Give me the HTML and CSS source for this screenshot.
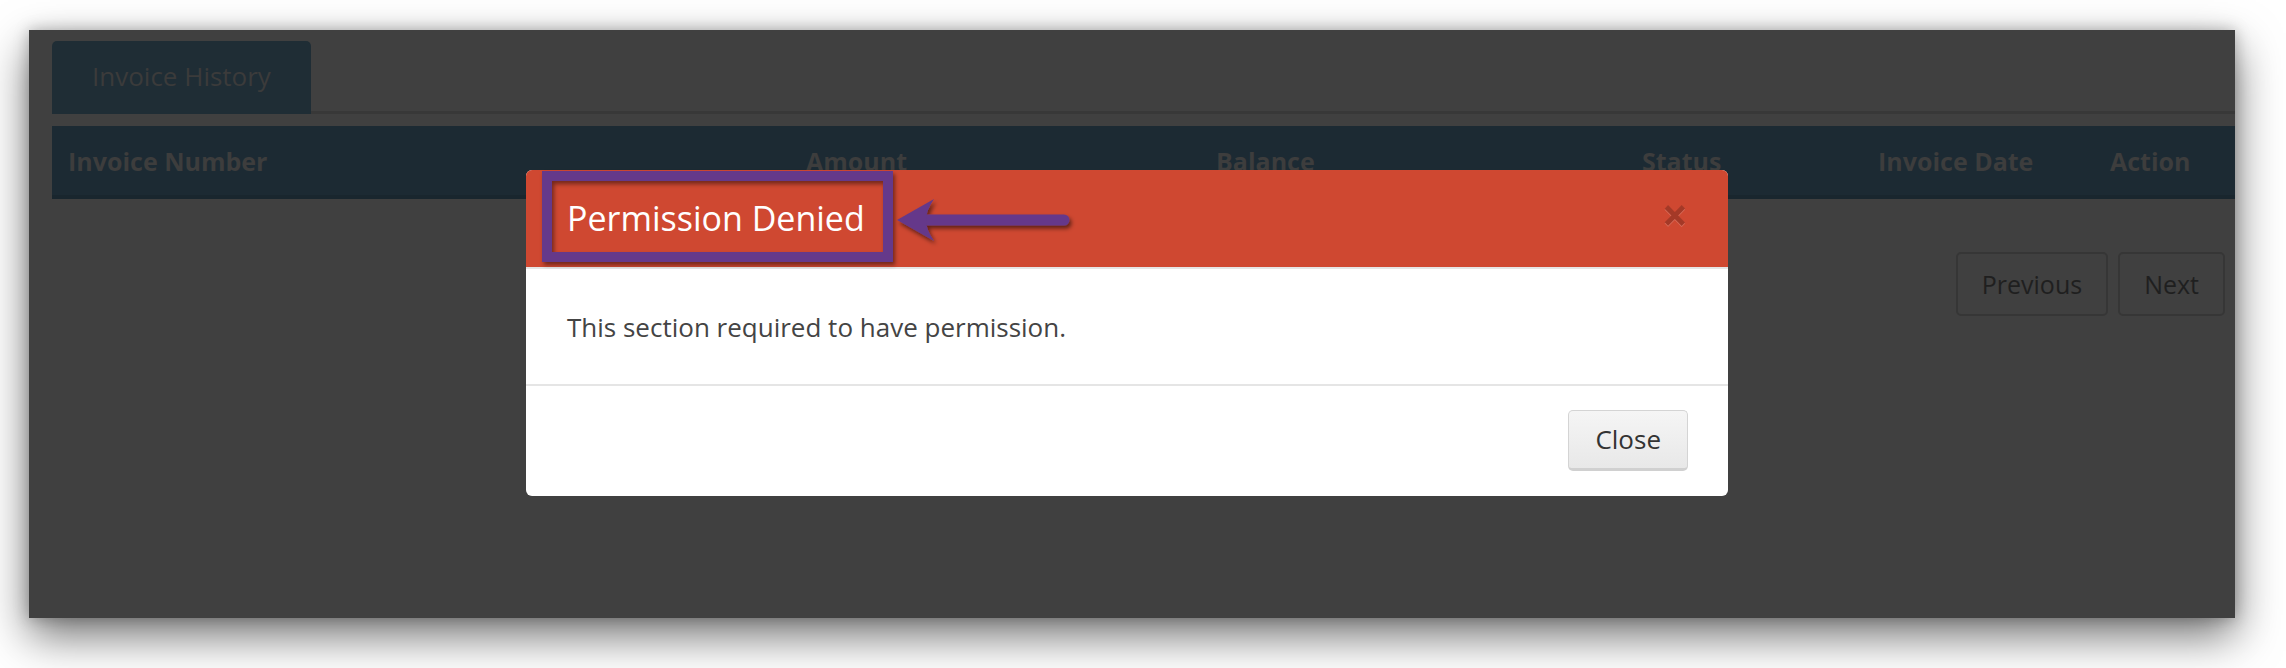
FILE: index.html
```html
<!DOCTYPE html>
<html>
<head>
<meta charset="utf-8">
<link rel="stylesheet" href="styles.css">
</head>
<body>
<div class="window">
  <div class="page">
    <div class="tabs">
      <div class="tab">Invoice History</div>
    </div>
    <div class="thead">
      <div class="th">Invoice Number</div>
      <div class="th">Amount</div>
      <div class="th">Balance</div>
      <div class="th">Status</div>
      <div class="th">Invoice Date</div>
      <div class="th">Action</div>
    </div>
    <div class="pager">
      <div class="pbtn">Previous</div>
      <div class="pbtn">Next</div>
    </div>
  </div>

  <div class="modal">
    <div class="modal-header">
      <div class="modal-title">Permission Denied</div>
      <div class="close">×</div>
    </div>
    <div class="modal-body">This section required to have permission.</div>
    <div class="modal-footer">
      <div class="btn">Close</div>
    </div>
    <div class="callout-box"></div>
    <svg class="callout-arrow" width="190" height="56" viewBox="0 0 190 56">
      <defs>
        <filter id="sh" x="-20%" y="-40%" width="140%" height="180%">
          <feDropShadow dx="2" dy="3" stdDeviation="2" flood-color="#000" flood-opacity="0.55"/>
        </filter>
      </defs>
      <g filter="url(#sh)">
        <line x1="36" y1="25" x2="174" y2="25" stroke="#65398a" stroke-width="11" stroke-linecap="round"/>
        <path d="M7 25 L44 4 Q36 16 36 25 Q36 34 44 46 Z" fill="#65398a"/>
      </g>
    </svg>
  </div>
</div>
</body>
</html>
```

FILE: styles.css
```css
html, body {
  margin: 0;
  padding: 0;
  background: #ffffff;
}
body {
  width: 2286px;
  height: 668px;
  overflow: hidden;
  font-family: "Open Sans", "Liberation Sans", sans-serif;
}
.window {
  position: relative;
  margin: 30px 0 0 29px;
  width: 2206px;
  height: 588px;
  background: #404040;
  box-shadow: 0 18px 42px rgba(0, 0, 0, 0.55), 0 0 14px rgba(0, 0, 0, 0.25);
}
.page {
  padding: 11px 0 0 23px;
}
.tabs {
  display: flex;
  border-bottom: 3px solid #383838;
  height: 70px;
}
.tab {
  width: 259px;
  height: 73px;
  box-sizing: border-box;
  background: #1f2d35;
  border-radius: 5px 5px 0 0;
  color: #3b3b3b;
  font-size: 26px;
  padding-left: 40px;
  line-height: 70px;
}
.thead {
  margin-top: 12px;
  height: 73px;
  box-sizing: border-box;
  background: #1c2a33;
  border-bottom: 4px solid #19262e;
  display: grid;
  grid-template-columns: 738px 410px 426px 236px 232px 1fr;
  align-items: center;
}
.th {
  padding-left: 16px;
  color: #3d3d3d;
  font-size: 25px;
  font-weight: 700;
}
.pager {
  margin-top: 53px;
  display: flex;
  justify-content: flex-end;
  gap: 10px;
  padding-right: 10px;
}
.pbtn {
  height: 64px;
  box-sizing: border-box;
  padding: 0 24px;
  border: 2px solid #363636;
  border-radius: 5px;
  color: #1f1f1f;
  font-size: 25px;
  line-height: 60px;
}
.modal {
  position: absolute;
  left: 497px;
  top: 140px;
  width: 1202px;
  background: #ffffff;
  border-radius: 6px;
}
.modal-header {
  height: 99px;
  box-sizing: border-box;
  background: #cf4831;
  border-radius: 6px 6px 0 0;
  border-bottom: 2px solid #e5e5e5;
  display: flex;
  align-items: center;
  justify-content: space-between;
  padding: 0 40px 2px 41px;
}
.modal-title {
  color: #ffffff;
  font-size: 34px;
  line-height: 40px;
}
.close {
  font-size: 46px;
  font-weight: 700;
  line-height: 1;
  color: #000;
  opacity: 0.2;
  text-shadow: 0 1px 0 #fff;
  margin-top: -8px;
}
.modal-body {
  height: 117px;
  box-sizing: border-box;
  padding: 40px 41px;
  color: #444;
  font-size: 26px;
  line-height: 37px;
  border-bottom: 2px solid #e5e5e5;
}
.modal-footer {
  display: flex;
  justify-content: flex-end;
  padding: 24px 40px 25px;
}
.btn {
  height: 61px;
  box-sizing: border-box;
  padding: 0 26px;
  background: linear-gradient(#f5f5f5, #e8e8e8);
  border: 1px solid #d4d4d4;
  border-bottom: 3px solid #d0d0d0;
  border-radius: 5px;
  color: #333;
  font-size: 26px;
  line-height: 57px;
}
.callout-box {
  position: absolute;
  left: 16px;
  top: 1px;
  width: 351px;
  height: 91px;
  box-sizing: border-box;
  border: 10px solid #65398a;
  box-shadow: 2px 3px 4px rgba(0, 0, 0, 0.45), inset 2px 3px 4px rgba(0, 0, 0, 0.45);
}
.callout-arrow {
  position: absolute;
  left: 364px;
  top: 25px;
}
```
